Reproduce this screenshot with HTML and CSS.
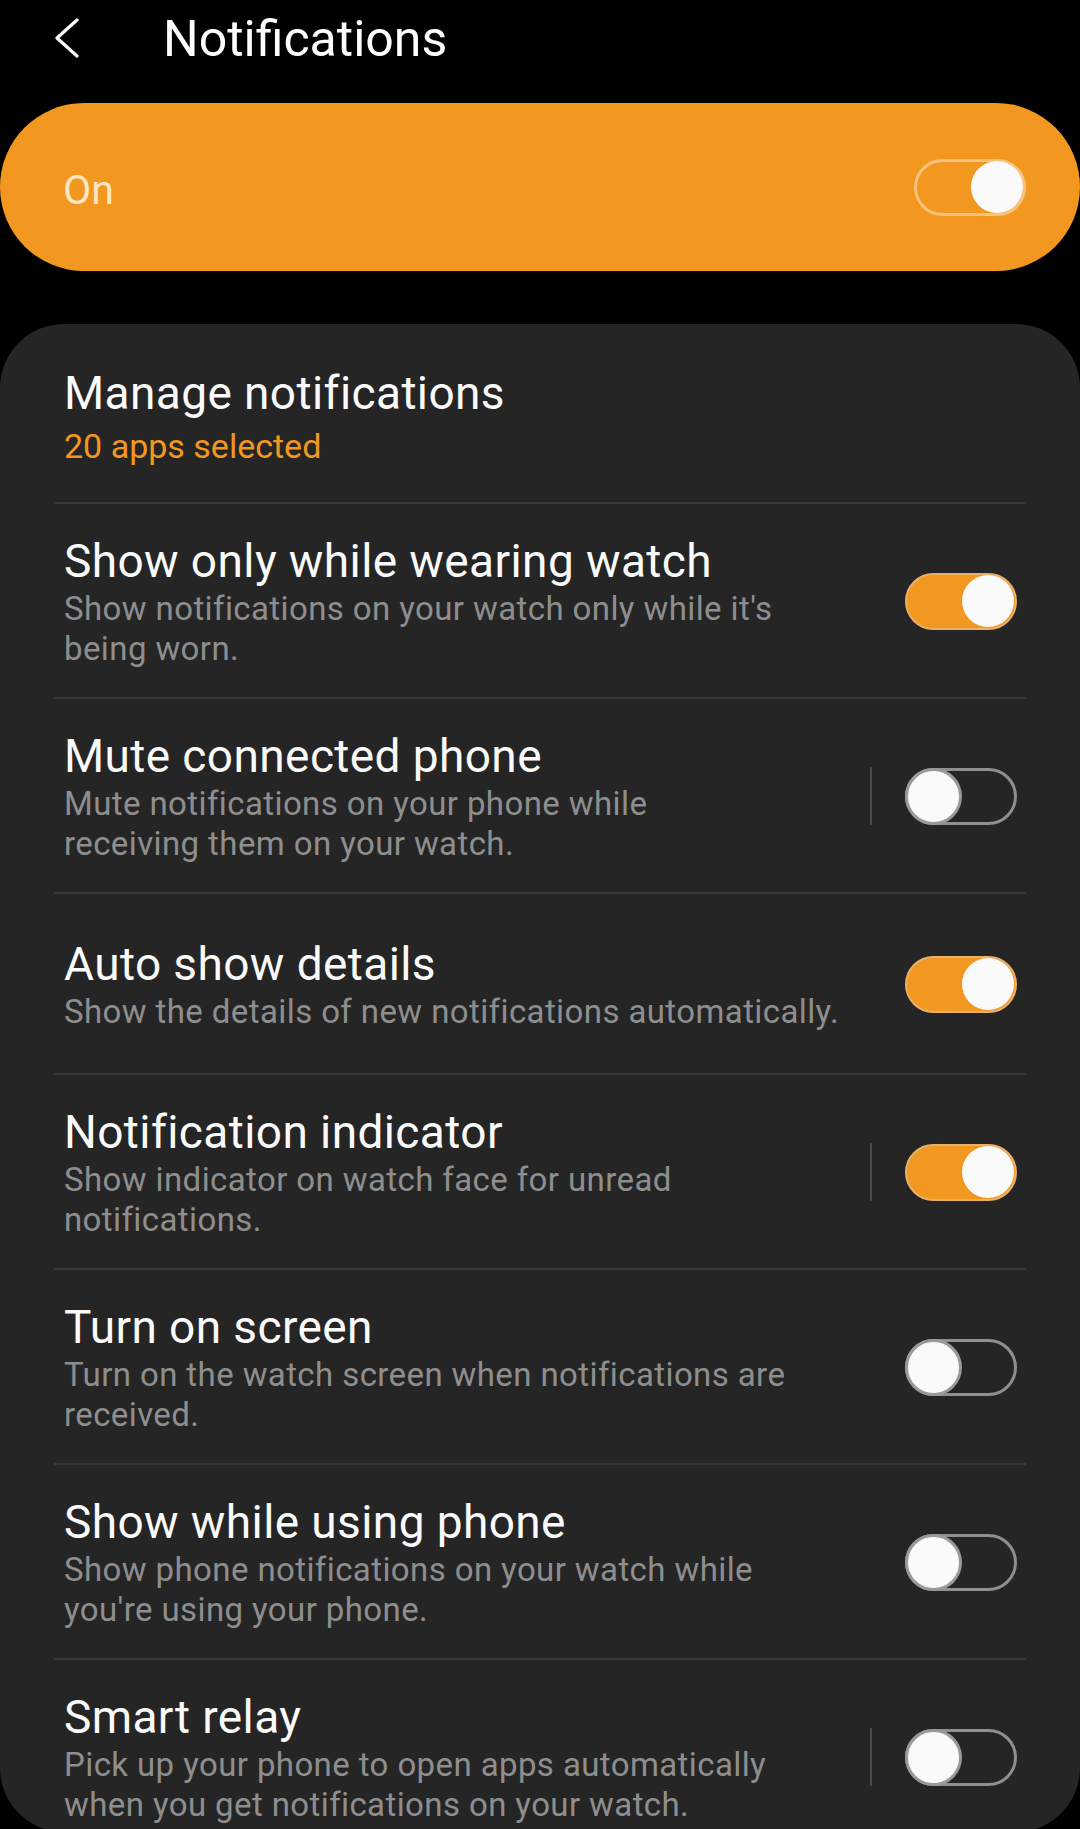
FILE: index.html
```html
<!DOCTYPE html>
<html lang="en">
<head>
<meta charset="utf-8">
<title>Notifications</title>
<link rel="stylesheet" href="styles.css">
</head>
<body>
<div class="screen">
  <header class="header">
    <svg class="back" width="26" height="40" viewBox="0 0 26 40" aria-hidden="true">
      <polyline points="22,2 2,20 22,38" fill="none" stroke="#ffffff" stroke-width="3.2" stroke-linecap="round" stroke-linejoin="round"/>
    </svg>
    <h1 class="title">Notifications</h1>
  </header>

  <div class="master">
    <span class="master-label">On</span>
    <span class="switch switch-master"><span class="knob"></span></span>
  </div>

  <section class="card">
    <div class="row row-first">
      <div class="text">
        <div class="row-title">Manage notifications</div>
        <div class="row-accent">20 apps selected</div>
      </div>
    </div>

    <div class="row">
      <div class="text">
        <div class="row-title">Show only while wearing watch</div>
        <div class="row-sub">Show notifications on your watch only while it's being worn.</div>
      </div>
      <span class="switch on"><span class="knob"></span></span>
    </div>

    <div class="row">
      <div class="text text-split">
        <div class="row-title">Mute connected phone</div>
        <div class="row-sub">Mute notifications on your phone while receiving them on your watch.</div>
      </div>
      <span class="vline"></span>
      <span class="switch off"><span class="knob"></span></span>
    </div>

    <div class="row">
      <div class="text">
        <div class="row-title">Auto show details</div>
        <div class="row-sub">Show the details of new notifications automatically.</div>
      </div>
      <span class="switch on"><span class="knob"></span></span>
    </div>

    <div class="row">
      <div class="text text-split">
        <div class="row-title">Notification indicator</div>
        <div class="row-sub">Show indicator on watch face for unread notifications.</div>
      </div>
      <span class="vline"></span>
      <span class="switch on"><span class="knob"></span></span>
    </div>

    <div class="row">
      <div class="text">
        <div class="row-title">Turn on screen</div>
        <div class="row-sub">Turn on the watch screen when notifications are received.</div>
      </div>
      <span class="switch off"><span class="knob"></span></span>
    </div>

    <div class="row">
      <div class="text">
        <div class="row-title">Show while using phone</div>
        <div class="row-sub">Show phone notifications on your watch while you're using your phone.</div>
      </div>
      <span class="switch off"><span class="knob"></span></span>
    </div>

    <div class="row row-last">
      <div class="text text-split">
        <div class="row-title">Smart relay</div>
        <div class="row-sub">Pick up your phone to open apps automatically when you get notifications on your watch.</div>
      </div>
      <span class="vline"></span>
      <span class="switch off"><span class="knob"></span></span>
    </div>
  </section>
</div>
</body>
</html>
```

FILE: styles.css
```css
html, body {
  margin: 0;
  padding: 0;
  background: #000000;
  overflow: hidden;
}

body {
  font-family: Roboto, "Noto Sans", "Liberation Sans", sans-serif;
  color: #fafafa;
}

.screen {
  width: 1080px;
  height: 1832px;
  overflow: hidden;
  border-radius: 0 0 64px 64px;
  background: #000000;
}

/* Header */
.header {
  height: 76px;
  display: flex;
  align-items: center;
  padding-left: 55px;
}

.back {
  display: block;
  flex: none;
}

.title {
  margin: 0 0 0 82px;
  font-size: 50px;
  font-weight: 400;
  line-height: 58px;
  color: #ffffff;
  position: relative;
  top: 1px;
}

/* Master switch bar */
.master {
  margin-top: 27px;
  height: 168px;
  border-radius: 84px;
  background: #f2971f;
  display: flex;
  align-items: center;
  justify-content: space-between;
  padding: 0 54px 0 63px;
}

.master-label {
  font-size: 41px;
  color: #fde6c4;
  line-height: 48px;
  padding-top: 6px;
}

/* Card */
.card {
  margin-top: 53px;
  background: #252525;
  border-radius: 64px 64px 0 0;
  padding: 0 54px;
}

.row {
  display: flex;
  align-items: center;
  box-sizing: border-box;
  min-height: 181px;
  padding: 29px 9px 28px 10px;
  border-bottom: 2px solid #383838;
}

.row-first {
  min-height: 180px;
  padding: 41px 9px 34px 10px;
}

.row-last {
  border-bottom: none;
}

.text {
  flex: 1;
  min-width: 0;
  margin-right: 62px;
}

.text-split {
  margin-right: 90px;
}

.row-title {
  font-size: 46px;
  letter-spacing: 0.4px;
  line-height: 56px;
  color: #fafafa;
}

.row-accent {
  margin-top: 3px;
  font-size: 34px;
  line-height: 44px;
  color: #f2971f;
}

.row-sub {
  font-size: 33px;
  letter-spacing: 0.4px;
  line-height: 40px;
  color: #8e8e8e;
}

.vline {
  flex: none;
  width: 2px;
  height: 58px;
  background: #4a4a4a;
  margin-right: 33px;
}

/* Switches */
.switch {
  flex: none;
  box-sizing: border-box;
  width: 112px;
  height: 57px;
  border-radius: 29px;
  display: flex;
  align-items: center;
}

.switch .knob {
  display: block;
  border-radius: 50%;
  background: #fafafa;
  box-sizing: border-box;
}

.switch.on {
  background: #f2971f;
  border: 2px solid #e9b06a;
  justify-content: flex-end;
  padding-right: 1px;
}

.switch.on .knob {
  width: 52px;
  height: 52px;
}

.switch.off {
  border: 3px solid #8f8f8f;
  justify-content: flex-start;
}

.switch.off .knob {
  width: 57px;
  height: 57px;
  margin-left: -3px;
  border: 3px solid #9a9a9a;
}

.switch-master {
  width: 112px;
  height: 57px;
  border: 3px solid #f8c27c;
  justify-content: flex-end;
  padding-right: 0;
}

.switch-master .knob {
  width: 52px;
  height: 52px;
}
```
